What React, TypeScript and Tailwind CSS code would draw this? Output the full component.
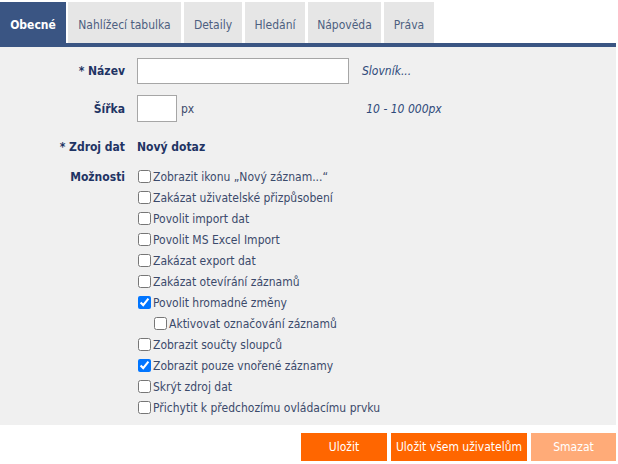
import React from 'react';

const tabs = [
  { label: 'Obecné', w: 'w-[66px]', active: true },
  { label: 'Nahlížecí tabulka', w: 'w-[113px]' },
  { label: 'Detaily', w: 'w-[58px]' },
  { label: 'Hledání', w: 'w-[60px]' },
  { label: 'Nápověda', w: 'w-[73px]' },
  { label: 'Práva', w: 'w-[50px]' },
];

const options: { label: string; checked?: boolean; indent?: boolean }[] = [
  { label: 'Zobrazit ikonu „Nový záznam...“' },
  { label: 'Zakázat uživatelské přizpůsobení' },
  { label: 'Povolit import dat' },
  { label: 'Povolit MS Excel Import' },
  { label: 'Zakázat export dat' },
  { label: 'Zakázat otevírání záznamů' },
  { label: 'Povolit hromadné změny', checked: true },
  { label: 'Aktivovat označování záznamů', indent: true },
  { label: 'Zobrazit součty sloupců' },
  { label: 'Zobrazit pouze vnořené záznamy', checked: true },
  { label: 'Skrýt zdroj dat' },
  { label: 'Přichytit k předchozímu ovládacímu prvku' },
];

function Label({ children }: { children: React.ReactNode }) {
  return (
    <div className="w-[125px] shrink-0 text-right font-bold text-[#1f3464]">{children}</div>
  );
}

export default function App() {
  return (
    <div className="w-[618px] h-[464px] bg-white text-[12px] text-[#3b4a6b] font-['DejaVu_Sans_Condensed','DejaVu_Sans',sans-serif]">
      {/* tabs */}
      <div className="flex items-end gap-[3px] h-[43px] pt-[2px]">
        {tabs.map((t) => (
          <div
            key={t.label}
            className={`${t.w} h-full pt-[4px] flex items-center justify-center ${
              t.active ? 'bg-[#3a5583] text-white font-bold mr-[-1px]' : 'bg-[#e6e6e6] text-[#4d5f80]'
            }`}
          >
            {t.label}
          </div>
        ))}
      </div>
      <div className="w-[616px] h-[4px] bg-[#3a5583]" />

      {/* panel */}
      <div className="w-[616px] bg-[#f0f0f0] pt-[11px] pb-[7px] flex flex-col">
        <div className="flex items-center h-[26px] gap-[12px]">
          <Label>* Název</Label>
          <input className="w-[212px] h-[26px] bg-white border border-[#a6a6a6] outline-none px-1" />
          <span className="ml-[1px] italic text-[#2e4a7a]">Slovník...</span>
        </div>
        <div className="flex items-center h-[27px] gap-[12px] mt-[11px]">
          <Label>Šířka</Label>
          <input className="w-[40px] h-[27px] bg-white border border-[#a6a6a6] outline-none px-1" />
          <span className="ml-[-8px]">px</span>
          <span className="ml-[160px] italic text-[#2e4a7a]">10 - 10 000px</span>
        </div>
        <div className="flex items-center h-[26px] gap-[12px] mt-[12px]">
          <Label>* Zdroj dat</Label>
          <span className="font-bold text-[#1f3464]">Nový dotaz</span>
        </div>
        <div className="flex gap-[12px] mt-[6px]">
          <div className="h-[21px] flex items-center">
            <Label>Možnosti</Label>
          </div>
          <div className="flex flex-col">
            {options.map((o) => (
              <label
                key={o.label}
                className={`h-[21px] flex items-center gap-[2px] ${o.indent ? 'pl-[17px]' : 'pl-[1px]'}`}
              >
                <input
                  type="checkbox"
                  defaultChecked={o.checked}
                  className="m-0 w-[13px] h-[13px] accent-[#0075ff]"
                />
                <span>{o.label}</span>
              </label>
            ))}
          </div>
        </div>
      </div>

      {/* buttons */}
      <div className="w-[616px] flex justify-end gap-[4px] mt-[8px]">
        <button className="w-[86px] h-[28px] bg-[#ff6600] text-white">Uložit</button>
        <button className="w-[136px] h-[28px] bg-[#ff6600] text-white">Uložit všem uživatelům</button>
        <button className="w-[85px] h-[28px] bg-[#ffab78] text-white">Smazat</button>
      </div>
    </div>
  );
}
